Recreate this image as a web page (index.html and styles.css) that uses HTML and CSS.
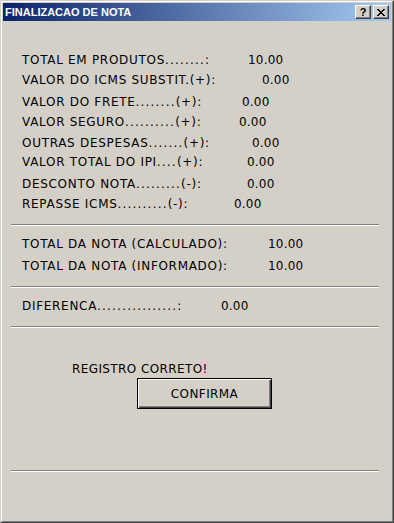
FILE: index.html
```html
<!DOCTYPE html>
<html>
<head>
<meta charset="utf-8">
<link rel="stylesheet" href="styles.css">
</head>
<body>
<div class="window">
  <div class="frame">
    <div class="titlebar">
      <span class="title">FINALIZACAO DE NOTA</span>
      <div class="tbtns">
        <div class="tbtn"><span class="q">?</span></div>
        <div class="tbtn">
          <svg width="8" height="7" viewBox="0 0 8 7" shape-rendering="crispEdges">
            <path d="M0 0h2v1h-2zM6 0h2v1h-2zM1 1h2v1h-2zM5 1h2v1h-2zM2 2h4v1h-4zM3 3h2v1h-2zM2 4h4v1h-4zM1 5h2v1h-2zM5 5h2v1h-2zM0 6h2v1h-2zM6 6h2v1h-2z" fill="#000"/>
          </svg>
        </div>
      </div>
    </div>
    <div class="client">
      <div class="row m32"><span class="lbl w226">TOTAL EM PRODUTOS<span class="dots">........</span>:</span><span class="val">10.00</span></div>
      <div class="row m6"><span class="lbl w240">VALOR DO ICMS SUBSTIT.(+):</span><span class="val">0.00</span></div>
      <div class="row m8"><span class="lbl w220">VALOR DO FRETE<span class="dots">........</span>(+):</span><span class="val">0.00</span></div>
      <div class="row m6"><span class="lbl w217">VALOR SEGURO<span class="dots">..........</span>(+):</span><span class="val">0.00</span></div>
      <div class="row m7"><span class="lbl w230">OUTRAS DESPESAS<span class="dots">.......</span>(+):</span><span class="val">0.00</span></div>
      <div class="row m5"><span class="lbl w225">VALOR TOTAL DO IPI<span class="dots">....</span>(+):</span><span class="val">0.00</span></div>
      <div class="row m8"><span class="lbl w225">DESCONTO NOTA<span class="dots">.........</span>(-):</span><span class="val">0.00</span></div>
      <div class="row m6"><span class="lbl w212">REPASSE ICMS<span class="dots">..........</span>(-):</span><span class="val">0.00</span></div>
      <div class="sep m13"></div>
      <div class="row m11"><span class="lbl w246">TOTAL DA NOTA (CALCULADO):</span><span class="val">10.00</span></div>
      <div class="row m8"><span class="lbl w246">TOTAL DA NOTA (INFORMADO):</span><span class="val">10.00</span></div>
      <div class="sep m13"></div>
      <div class="row m11"><span class="lbl w199">DIFERENCA<span class="dots">................</span>:</span><span class="val">0.00</span></div>
      <div class="sep m13"></div>
      <div class="status">REGISTRO CORRETO!</div>
      <div class="btn">CONFIRMA</div>
      <div class="sep m61"></div>
    </div>
  </div>
</div>
</body>
</html>
```
FILE: styles.css
```css
html, body {
  margin: 0;
  padding: 0;
  background: #d4d0c8;
}
.window {
  width: 394px;
  height: 523px;
  box-sizing: border-box;
  border: 1px solid;
  border-color: #d4d0c8 #404040 #404040 #d4d0c8;
}
.frame {
  height: 100%;
  box-sizing: border-box;
  border: 1px solid;
  border-color: #ffffff #808080 #808080 #ffffff;
  padding: 1px;
  display: flex;
  flex-direction: column;
}
.titlebar {
  flex: none;
  height: 18px;
  background: linear-gradient(to right, #0a246a, #a6caf0);
  display: flex;
  align-items: center;
  justify-content: space-between;
  padding: 0 2px;
}
.title {
  color: #fff;
  font-family: "Liberation Sans", Arial, sans-serif;
  font-weight: bold;
  font-size: 11px;
  line-height: 18px;
}
.tbtns {
  display: flex;
  gap: 2px;
}
.tbtn {
  width: 16px;
  height: 14px;
  box-sizing: border-box;
  background: #d4d0c8;
  border: 1px solid;
  border-color: #ffffff #404040 #404040 #ffffff;
  box-shadow: inset -1px -1px 0 #808080;
  display: flex;
  align-items: center;
  justify-content: center;
}
.q {
  font-family: "Liberation Sans", Arial, sans-serif;
  font-weight: bold;
  font-size: 11px;
  line-height: 12px;
  color: #000;
  margin-top: -1px;
}
.client {
  flex: 1;
  display: flex;
  flex-direction: column;
  font-family: "DejaVu Sans", Verdana, sans-serif;
  font-size: 12px;
  letter-spacing: 0.4px;
  color: #000;
}
.row {
  display: flex;
  height: 14px;
  line-height: 14px;
  margin-left: 19px;
  white-space: nowrap;
}
.lbl {
  flex: none;
  letter-spacing: 0.7px;
}
.dots { letter-spacing: 1.2px; }
.val { letter-spacing: 0.2px; }
.w199 { width: 199px; }
.w212 { width: 212px; }
.w217 { width: 217px; }
.w220 { width: 220px; }
.w225 { width: 225px; }
.w226 { width: 226px; }
.w230 { width: 230px; }
.w240 { width: 240px; }
.w246 { width: 246px; }
.m5 { margin-top: 5px; }
.m6 { margin-top: 6px; }
.m7 { margin-top: 7px; }
.m8 { margin-top: 8px; }
.m11 { margin-top: 11px; }
.m13 { margin-top: 13px; }
.m32 { margin-top: 32px; }
.m61 { margin-top: 61px; }
.sep {
  width: 368px;
  height: 0;
  margin-left: 8px;
  border-top: 1px solid #808080;
  border-bottom: 1px solid #ffffff;
}
.status {
  margin-top: 34px;
  margin-left: 69px;
  height: 14px;
  line-height: 14px;
}
.btn {
  margin-top: 2px;
  margin-left: 134px;
  width: 135px;
  height: 31px;
  box-sizing: border-box;
  border: 1px solid #000;
  box-shadow: inset 1px 1px 0 #ffffff, inset -1px -1px 0 #404040, inset -2px -2px 0 #808080;
  display: flex;
  align-items: center;
  justify-content: center;
}
```
